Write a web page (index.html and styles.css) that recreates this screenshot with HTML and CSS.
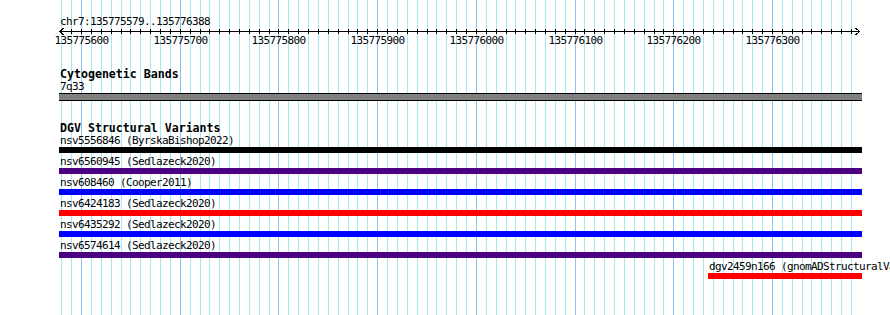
FILE: index.html
```html
<!DOCTYPE html>
<html lang="en">
<head>
    <meta charset="UTF-8">
    <title>chr7:135775579..135776388</title>
    <link rel="stylesheet" href="styles.css">
</head>
<body>
    <div class="panel">
        <!-- 10bp grid behind every track -->
        <svg class="grid" width="890" height="315"></svg>

        <svg class="ruler" width="890" height="46">
            <text class="ruler-title" x="60" y="25">chr7:135775579..135776388</text>
            <line class="axis" x1="59" y1="31.5" x2="860" y2="31.5" />
            <path class="axis" d="M63.5 28 L59.5 31.5 L63.5 35" />
            <path class="axis" d="M855.5 28 L859.5 31.5 L855.5 35" />
            <g class="ticks"></g>
        </svg>

        <div class="track track-first">
            <div class="track-title">Cytogenetic Bands</div>
            <div class="feature">
                <div class="feature-label">7q33</div>
                <div class="bar band" style="width: 803px"></div>
            </div>
        </div>

        <div class="track">
            <div class="track-title">DGV Structural Variants</div>
            <div class="feature">
                <div class="feature-label">nsv5556846 (ByrskaBishop2022)</div>
                <div class="bar black" style="width: 803px"></div>
            </div>
            <div class="feature">
                <div class="feature-label">nsv6560945 (Sedlazeck2020)</div>
                <div class="bar indigo" style="width: 803px"></div>
            </div>
            <div class="feature">
                <div class="feature-label">nsv608460 (Cooper2011)</div>
                <div class="bar blue" style="width: 803px"></div>
            </div>
            <div class="feature">
                <div class="feature-label">nsv6424183 (Sedlazeck2020)</div>
                <div class="bar red" style="width: 803px"></div>
            </div>
            <div class="feature">
                <div class="feature-label">nsv6435292 (Sedlazeck2020)</div>
                <div class="bar blue" style="width: 803px"></div>
            </div>
            <div class="feature">
                <div class="feature-label">nsv6574614 (Sedlazeck2020)</div>
                <div class="bar indigo" style="width: 803px"></div>
            </div>
            <div class="feature" style="margin-left: 649px">
                <div class="feature-label">dgv2459n166 (gnomADStructuralVariants)</div>
                <div class="bar red" style="width: 154px"></div>
            </div>
        </div>
    </div>

    <script src="script.js"></script>
</body>
</html>
```

FILE: styles.css
```css
* {
    margin: 0;
    padding: 0;
    box-sizing: border-box;
}

body {
    width: 890px;
    height: 315px;
    overflow: hidden;
    background: #fff;
    font-family: 'DejaVu Sans Mono', 'Liberation Mono', monospace;
    font-size: 11px;
    letter-spacing: -0.62px;
    color: #000;
}

.panel {
    position: relative;
    width: 890px;
    height: 315px;
}

.grid {
    position: absolute;
    top: 0;
    left: 0;
}

.grid line {
    stroke: #a8e8f0;
    stroke-width: 1;
    shape-rendering: crispEdges;
}

.grid line.major {
    stroke: #8cc4ee;
}

.ruler {
    position: relative;
    display: block;
}

.ruler text {
    font-family: 'DejaVu Sans Mono', monospace;
    font-size: 11px;
    letter-spacing: -0.62px;
    fill: #000;
}

.ruler .axis,
.ruler .ticks line {
    stroke: #000;
    stroke-width: 1;
    fill: none;
    shape-rendering: crispEdges;
}

.track {
    position: relative;
    margin-top: 21px;
    padding-left: 59px;
    white-space: nowrap;
}

.track-first {
    margin-top: 22px;
}

.track-title {
    padding-left: 1px;
    font-size: 11.6px;
    letter-spacing: 0;
    font-weight: bold;
    line-height: 12px;
}

.feature {
    margin-bottom: 2px;
}

.feature-label {
    padding-left: 1px;
    line-height: 13px;
    height: 13px;
}

.bar {
    height: 6px;
}

.band {
    height: 8px;
    background: #808080;
    border-top: 1px solid #000;
    border-bottom: 1px solid #000;
}

.black {
    background: #000;
}

.indigo {
    background: #4b0082;
}

.blue {
    background: #0000ff;
}

.red {
    background: #ff0000;
}
```

FILE: script.js
```js
// grid lines and ruler ticks every 10bp, label every 100bp
const SVG_NS = 'http://www.w3.org/2000/svg';
const grid = document.querySelector('.grid');
const ticks = document.querySelector('.ticks');

function line(parent, x, y1, y2, cls) {
    const el = document.createElementNS(SVG_NS, 'line');
    el.setAttribute('x1', x);
    el.setAttribute('x2', x);
    el.setAttribute('y1', y1);
    el.setAttribute('y2', y2);
    if (cls) el.setAttribute('class', cls);
    parent.appendChild(el);
}

for (let k = 0; k <= 80; k++) {
    const bp = 135775580 + k * 10;
    const x = Math.round(61.35 + k * 9.87) + 0.5;
    const major = bp % 100 === 0;

    line(grid, x, 0, 315, major ? 'major' : '');
    line(ticks, x, 29, 34);

    if (major) {
        const label = document.createElementNS(SVG_NS, 'text');
        label.setAttribute('x', x);
        label.setAttribute('y', 44);
        label.setAttribute('text-anchor', 'middle');
        label.textContent = bp;
        ticks.parentNode.appendChild(label);
    }
}
```
